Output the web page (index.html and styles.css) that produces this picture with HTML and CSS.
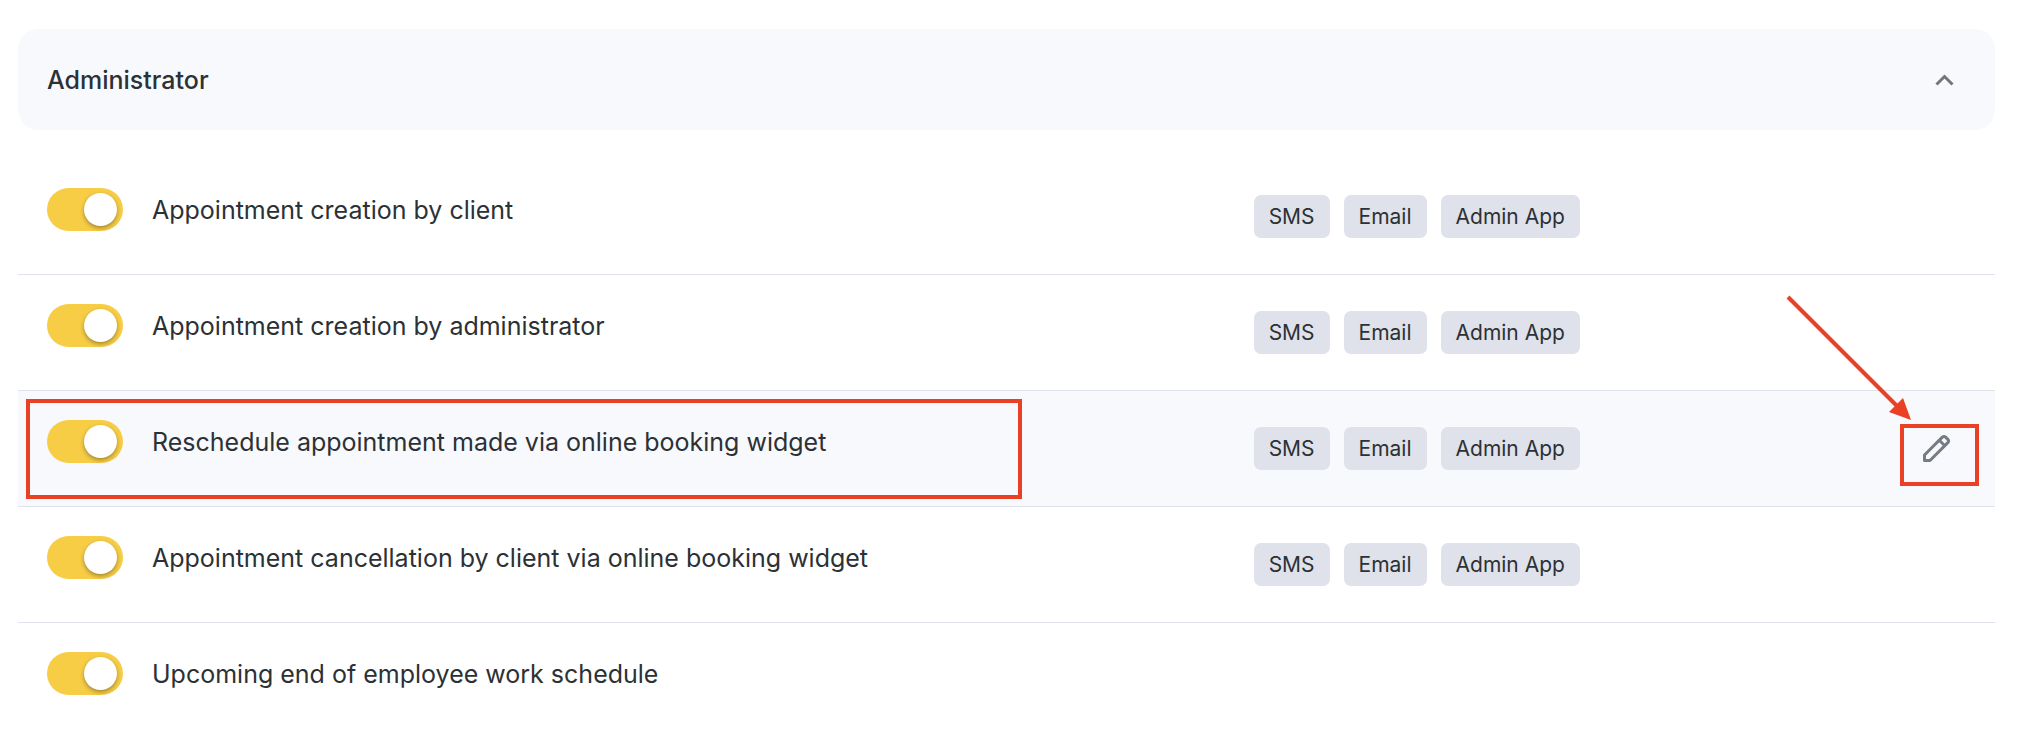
FILE: index.html
```html
<!DOCTYPE html>
<html lang="en">
<head>
    <meta charset="UTF-8">
    <meta name="viewport" content="width=device-width, initial-scale=1.0">
    <title>Notifications</title>
    <link rel="stylesheet" href="styles.css">
</head>
<body>
    <section class="group">
        <h2 class="group-title">
            <button type="button" class="group-header" aria-expanded="true" aria-controls="admin-list">
                <span>Administrator</span>
                <svg class="chevron" viewBox="0 0 20 12" aria-hidden="true">
                    <path d="M1.5 10.5 L9.5 2.5 L17.5 10.5"/>
                </svg>
            </button>
        </h2>

        <ul class="list" id="admin-list">
            <li class="row">
                <label class="name">
                    <input type="checkbox" class="toggle" role="switch" checked>
                    <span>Appointment creation by client</span>
                </label>
                <div class="tags">
                    <span class="tag">SMS</span>
                    <span class="tag">Email</span>
                    <span class="tag">Admin App</span>
                </div>
            </li>
            <li class="row">
                <label class="name">
                    <input type="checkbox" class="toggle" role="switch" checked>
                    <span>Appointment creation by administrator</span>
                </label>
                <div class="tags">
                    <span class="tag">SMS</span>
                    <span class="tag">Email</span>
                    <span class="tag">Admin App</span>
                </div>
            </li>
            <li class="row row-active">
                <label class="name">
                    <input type="checkbox" class="toggle" role="switch" checked>
                    <span>Reschedule appointment made via online booking widget</span>
                </label>
                <div class="tags">
                    <span class="tag">SMS</span>
                    <span class="tag">Email</span>
                    <span class="tag">Admin App</span>
                    <button type="button" class="edit" aria-label="Edit">
                        <svg viewBox="0 0 28 28" aria-hidden="true">
                            <path d="M1.5 25.5 V20 L19.1 2.4 Q21 0.5 22.9 2.4 L24.6 4.1 Q26.5 6 24.6 7.9 L7 25.5 Z"/>
                            <path d="M16.3 5.2 L21.8 10.7"/>
                        </svg>
                    </button>
                </div>
                <!-- callouts over the row -->
                <span class="mark mark-name"></span>
                <span class="mark mark-edit"></span>
                <svg class="arrow" viewBox="0 0 130 130" aria-hidden="true">
                    <path class="arrow-line" d="M4 4 L115 115"/>
                    <path class="arrow-head" d="M119 105 L127 127 L105 119 Z"/>
                </svg>
            </li>
            <li class="row">
                <label class="name">
                    <input type="checkbox" class="toggle" role="switch" checked>
                    <span>Appointment cancellation by client via online booking widget</span>
                </label>
                <div class="tags">
                    <span class="tag">SMS</span>
                    <span class="tag">Email</span>
                    <span class="tag">Admin App</span>
                </div>
            </li>
            <li class="row">
                <label class="name">
                    <input type="checkbox" class="toggle" role="switch" checked>
                    <span>Upcoming end of employee work schedule</span>
                </label>
            </li>
        </ul>
    </section>
</body>
</html>
```
FILE: styles.css
```css
* {
    box-sizing: border-box;
}

body {
    font-family: Inter, 'Liberation Sans', sans-serif;
    font-size: 25px;
    line-height: 44px;
    color: #2c3135;
    background-color: #fff;
    margin: 0;
    padding: 29px 37px 0 18px;
}

.group-title {
    margin: 0 0 29px;
    font-size: 25px;
}

.group-header {
    display: flex;
    justify-content: space-between;
    align-items: center;
    width: 100%;
    padding: 29px 40px 28px 29px;
    border: none;
    border-radius: 20px;
    background-color: #f8f9fd;
    color: inherit;
    font: inherit;
    font-weight: 500;
    cursor: pointer;
}

.chevron {
    width: 20px;
    height: 12px;
    fill: none;
    stroke: #757575;
    stroke-width: 3;
}

.list {
    list-style: none;
    margin: 0;
    padding: 0;
}

.row {
    position: relative;
    display: grid;
    grid-template-columns: 5fr 3fr;
    align-items: start;
    min-height: 116px;
    padding: 29px 0;
    border-bottom: 1px solid #dfe2ea;
}

.row:last-child {
    border-bottom: none;
}

.row-active {
    background-color: #f8f9fd;
}

.name {
    display: flex;
    gap: 29px;
    padding-left: 29px;
    cursor: pointer;
}

.toggle {
    appearance: none;
    flex: none;
    width: 76px;
    height: 43px;
    margin: 0;
    padding: 5px 6px;
    border-radius: 22px;
    background-color: #c9ccd4;
    cursor: pointer;
}

.toggle::before {
    content: "";
    display: block;
    width: 33px;
    height: 33px;
    border-radius: 50%;
    background-color: #fff;
    box-shadow: 0 2px 4px rgba(0, 0, 0, 0.35);
}

.toggle:checked {
    background-color: #f7cd46;
}

.toggle:checked::before {
    margin-left: auto;
}

.tags {
    display: flex;
    gap: 14px;
    padding: 7px 44px 0 0;
}

.tag {
    padding: 0 15px;
    border-radius: 7px;
    background-color: #dfe2ea;
    font-size: 21px;
    line-height: 43px;
}

.edit {
    display: flex;
    align-items: center;
    height: 43px;
    margin-left: auto;
    padding: 0;
    border: none;
    background: none;
    cursor: pointer;
}

.edit svg {
    width: 28px;
    height: 28px;
    fill: none;
    stroke: #777b84;
    stroke-width: 3;
    stroke-linejoin: round;
}

.mark {
    position: absolute;
    border: 4px solid #ea4025;
    pointer-events: none;
}

.mark-name {
    top: 8px;
    left: 8px;
    width: 996px;
    height: 100px;
}

.mark-edit {
    top: 33px;
    right: 16px;
    width: 79px;
    height: 62px;
}

.arrow {
    position: absolute;
    top: -98px;
    right: 81px;
    width: 130px;
    height: 130px;
    pointer-events: none;
}

.arrow-line {
    stroke: #ea4025;
    stroke-width: 4;
}

.arrow-head {
    fill: #ea4025;
}
```
